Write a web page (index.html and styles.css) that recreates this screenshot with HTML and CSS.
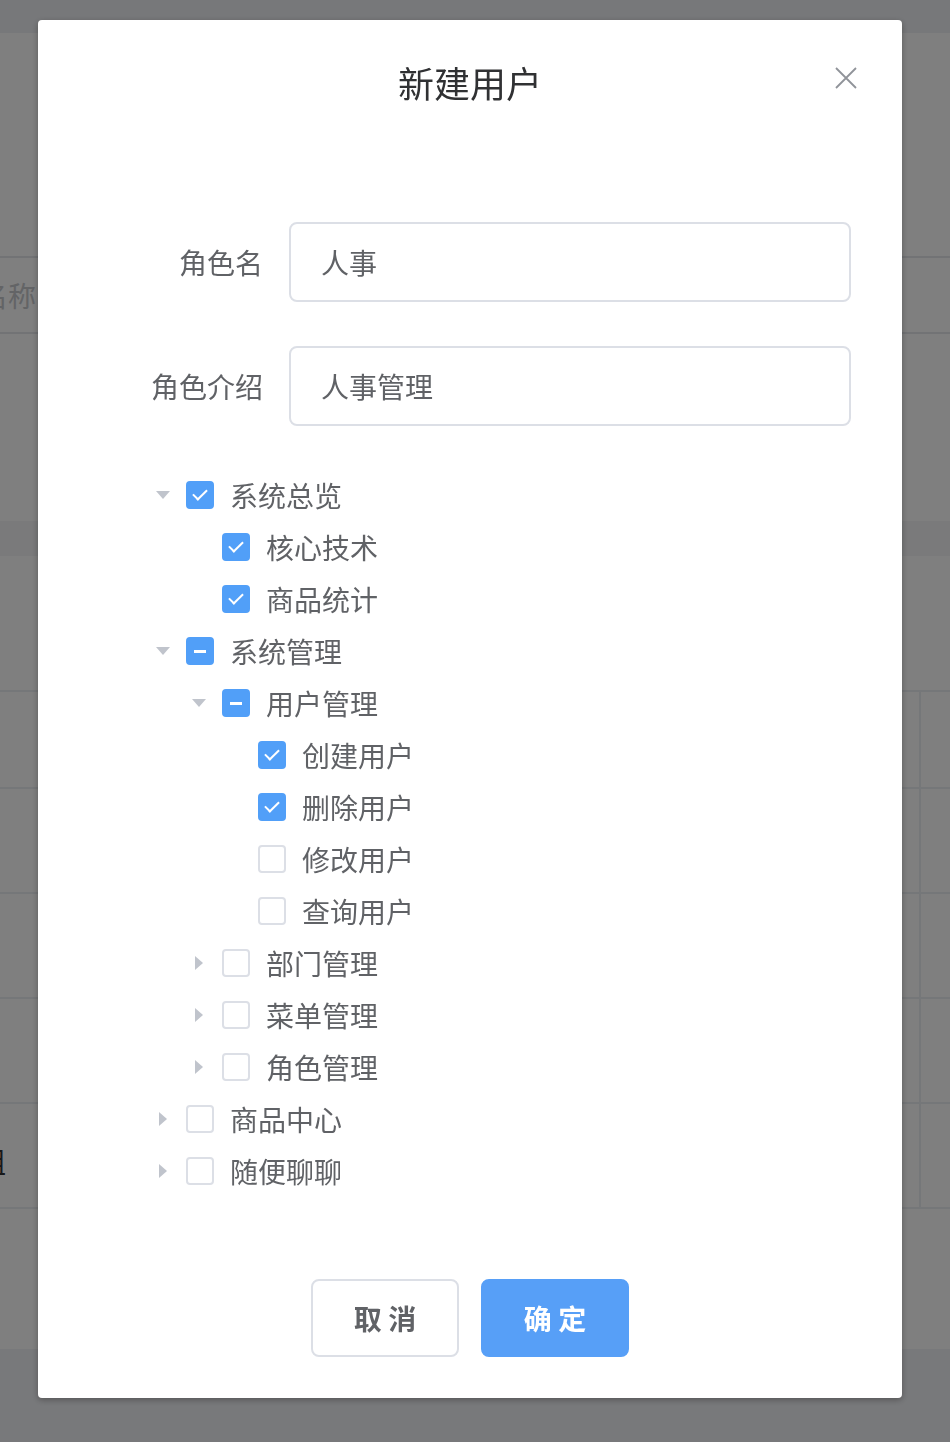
FILE: index.html
```html
<!DOCTYPE html>
<html lang="zh-CN">

<head>
    <meta charset="UTF-8">
    <meta name="viewport" content="width=device-width, initial-scale=1.0">
    <title>新建用户</title>

    <link rel="stylesheet" href="styles.css">
</head>

<body>

    <div class="page">
        <div class="topbar"></div>
        <div class="search"></div>
        <div class="thead"><span class="cut-text">名称</span></div>
        <div class="spacer spacer-a"></div>
        <div class="band"></div>
        <div class="spacer spacer-b"></div>
        <div class="trow trow-first"><div class="cell"></div><div class="cell-end"></div></div>
        <div class="trow"><div class="cell"></div><div class="cell-end"></div></div>
        <div class="trow"><div class="cell"></div><div class="cell-end"></div></div>
        <div class="trow"><div class="cell"></div><div class="cell-end"></div></div>
        <div class="trow"><div class="cell"><span class="cut-text cut-row">组</span></div><div class="cell-end"></div></div>
        <div class="spacer spacer-c"></div>
        <div class="pager"></div>
    </div>

    <div class="mask">
        <div class="dialog">
            <div class="dialog-header">
                <span class="dialog-title">新建用户</span>
                <button class="dialog-close" type="button" aria-label="关闭">
                    <svg width="22" height="22" viewBox="0 0 22 22">
                        <path d="M1 1 L21 21 M21 1 L1 21" stroke="#909399" stroke-width="1.8" fill="none" />
                    </svg>
                </button>
            </div>

            <div class="dialog-body">
                <form class="role-form">
                    <div class="form-item">
                        <label class="form-label" for="roleName">角色名</label>
                        <input class="form-input" id="roleName" type="text" value="人事">
                    </div>
                    <div class="form-item">
                        <label class="form-label" for="roleDesc">角色介绍</label>
                        <input class="form-input" id="roleDesc" type="text" value="人事管理">
                    </div>
                </form>

                <div class="tree">
                    <!-- 系统总览 -->
                    <div class="tree-node lv1">
                        <span class="arrow down"></span>
                        <span class="check checked"></span>
                        <span class="node-label">系统总览</span>
                    </div>
                    <div class="tree-node lv2">
                        <span class="arrow none"></span>
                        <span class="check checked"></span>
                        <span class="node-label">核心技术</span>
                    </div>
                    <div class="tree-node lv2">
                        <span class="arrow none"></span>
                        <span class="check checked"></span>
                        <span class="node-label">商品统计</span>
                    </div>

                    <!-- 系统管理 -->
                    <div class="tree-node lv1">
                        <span class="arrow down"></span>
                        <span class="check half"></span>
                        <span class="node-label">系统管理</span>
                    </div>
                    <div class="tree-node lv2">
                        <span class="arrow down"></span>
                        <span class="check half"></span>
                        <span class="node-label">用户管理</span>
                    </div>
                    <div class="tree-node lv3">
                        <span class="arrow none"></span>
                        <span class="check checked"></span>
                        <span class="node-label">创建用户</span>
                    </div>
                    <div class="tree-node lv3">
                        <span class="arrow none"></span>
                        <span class="check checked"></span>
                        <span class="node-label">删除用户</span>
                    </div>
                    <div class="tree-node lv3">
                        <span class="arrow none"></span>
                        <span class="check"></span>
                        <span class="node-label">修改用户</span>
                    </div>
                    <div class="tree-node lv3">
                        <span class="arrow none"></span>
                        <span class="check"></span>
                        <span class="node-label">查询用户</span>
                    </div>
                    <div class="tree-node lv2">
                        <span class="arrow right"></span>
                        <span class="check"></span>
                        <span class="node-label">部门管理</span>
                    </div>
                    <div class="tree-node lv2">
                        <span class="arrow right"></span>
                        <span class="check"></span>
                        <span class="node-label">菜单管理</span>
                    </div>
                    <div class="tree-node lv2">
                        <span class="arrow right"></span>
                        <span class="check"></span>
                        <span class="node-label">角色管理</span>
                    </div>

                    <div class="tree-node lv1">
                        <span class="arrow right"></span>
                        <span class="check"></span>
                        <span class="node-label">商品中心</span>
                    </div>
                    <div class="tree-node lv1">
                        <span class="arrow right"></span>
                        <span class="check"></span>
                        <span class="node-label">随便聊聊</span>
                    </div>
                </div>
            </div>

            <div class="dialog-footer">
                <button type="button" class="btn btn-default">取 消</button>
                <button type="button" class="btn btn-primary">确 定</button>
            </div>
        </div>
    </div>

</body>
</html>
```

FILE: styles.css
```css
html,
body {
    margin: 0;
    padding: 0;
}

body {
    width: 950px;
    height: 1442px;
    overflow: hidden;
    font-family: "Noto Sans CJK SC", "Noto Sans", sans-serif;
    background-color: #fff;
}

/* page under the mask */
.page {
    width: 950px;
}

.topbar {
    height: 33px;
    background-color: #eff1f4;
}

.search {
    height: 223px;
    border-bottom: 2px solid #e4e6ea;
}

.thead {
    height: 74px;
    border-bottom: 2px solid #e4e6ea;
    display: flex;
    align-items: center;
}

.cut-text {
    margin-left: -20px;
    font-size: 28px;
    color: #c6c8cc;
}

.spacer-a {
    height: 187px;
}

.band {
    height: 35px;
    background-color: #f4f5f7;
}

.spacer-b {
    height: 134px;
}

.trow {
    height: 103px;
    border-bottom: 2px solid #ebeef2;
    display: flex;
}

.trow-first {
    height: 95px;
    border-top: 2px solid #ebeef2;
}

.cell {
    width: 919px;
    border-right: 2px solid #ebeef2;
    display: flex;
    align-items: center;
}

.cut-row {
    margin-left: -22px;
    color: #303133;
    padding-top: 10px;
}

.cell-end {
    flex: 1;
}

.spacer-c {
    height: 140px;
}

.pager {
    height: 100px;
    background-color: #f1f2f6;
}

/* mask + dialog */
.mask {
    position: fixed;
    inset: 0;
    background-color: rgba(0, 0, 0, 0.5);
}

.dialog {
    position: absolute;
    top: 20px;
    left: 38px;
    width: 864px;
    height: 1378px;
    background-color: #fff;
    border-radius: 4px;
    box-shadow: 0 2px 6px rgba(0, 0, 0, 0.3);
    display: flex;
    flex-direction: column;
}

.dialog-header {
    position: relative;
    padding: 40px 40px 0;
    text-align: center;
}

.dialog-title {
    display: block;
    font-size: 36px;
    line-height: 44px;
    color: #303133;
}

.dialog-close {
    position: absolute;
    top: 47px;
    right: 45px;
    padding: 0;
    border: none;
    background: none;
    line-height: 0;
    cursor: pointer;
}

.dialog-body {
    padding: 118px 51px 0 0;
}

.form-item {
    display: flex;
    align-items: center;
    margin-bottom: 44px;
}

.form-label {
    width: 225px;
    padding-right: 26px;
    text-align: right;
    font-size: 28px;
    color: #606266;
}

.form-input {
    box-sizing: border-box;
    width: 562px;
    height: 80px;
    padding: 0 30px;
    font-family: inherit;
    font-size: 28px;
    color: #606266;
    border: 2px solid #dcdfe6;
    border-radius: 8px;
    outline: none;
}

/* tree */
.tree {
    margin-top: -1px;
    margin-left: 113px;
}

.tree-node {
    display: flex;
    align-items: center;
    height: 52px;
}

.lv2 {
    padding-left: 36px;
}

.lv3 {
    padding-left: 72px;
}

.arrow {
    width: 24px;
    height: 24px;
    display: flex;
    align-items: center;
    justify-content: center;
}

.arrow.down::before {
    content: "";
    border-left: 7px solid transparent;
    border-right: 7px solid transparent;
    border-top: 8px solid #c0c4cc;
}

.arrow.right::before {
    content: "";
    border-top: 7px solid transparent;
    border-bottom: 7px solid transparent;
    border-left: 8px solid #c0c4cc;
}

.check {
    position: relative;
    box-sizing: border-box;
    width: 28px;
    height: 28px;
    margin-left: 11px;
    border: 2px solid #dcdfe6;
    border-radius: 4px;
    background-color: #fff;
}

.check.checked,
.check.half {
    border-color: #519ff8;
    background-color: #519ff8;
}

.check.checked::after {
    content: "";
    position: absolute;
    left: 8px;
    top: 3px;
    width: 6px;
    height: 12px;
    border-right: 2px solid #fff;
    border-bottom: 2px solid #fff;
    transform: rotate(45deg);
}

.check.half::after {
    content: "";
    position: absolute;
    left: 6px;
    top: 11px;
    width: 12px;
    height: 3px;
    background-color: #fff;
}

.node-label {
    margin-left: 16px;
    font-size: 28px;
    color: #606266;
}

/* footer */
.dialog-footer {
    margin-top: auto;
    padding-bottom: 41px;
    display: flex;
    justify-content: center;
    gap: 22px;
}

.btn {
    box-sizing: border-box;
    width: 148px;
    height: 78px;
    font-family: inherit;
    font-size: 28px;
    font-weight: 700;
    border-radius: 8px;
    cursor: pointer;
}

.btn-default {
    color: #606266;
    background-color: #fff;
    border: 2px solid #dcdfe6;
}

.btn-primary {
    color: #fff;
    background-color: #579ff7;
    border: 2px solid #579ff7;
}
```
